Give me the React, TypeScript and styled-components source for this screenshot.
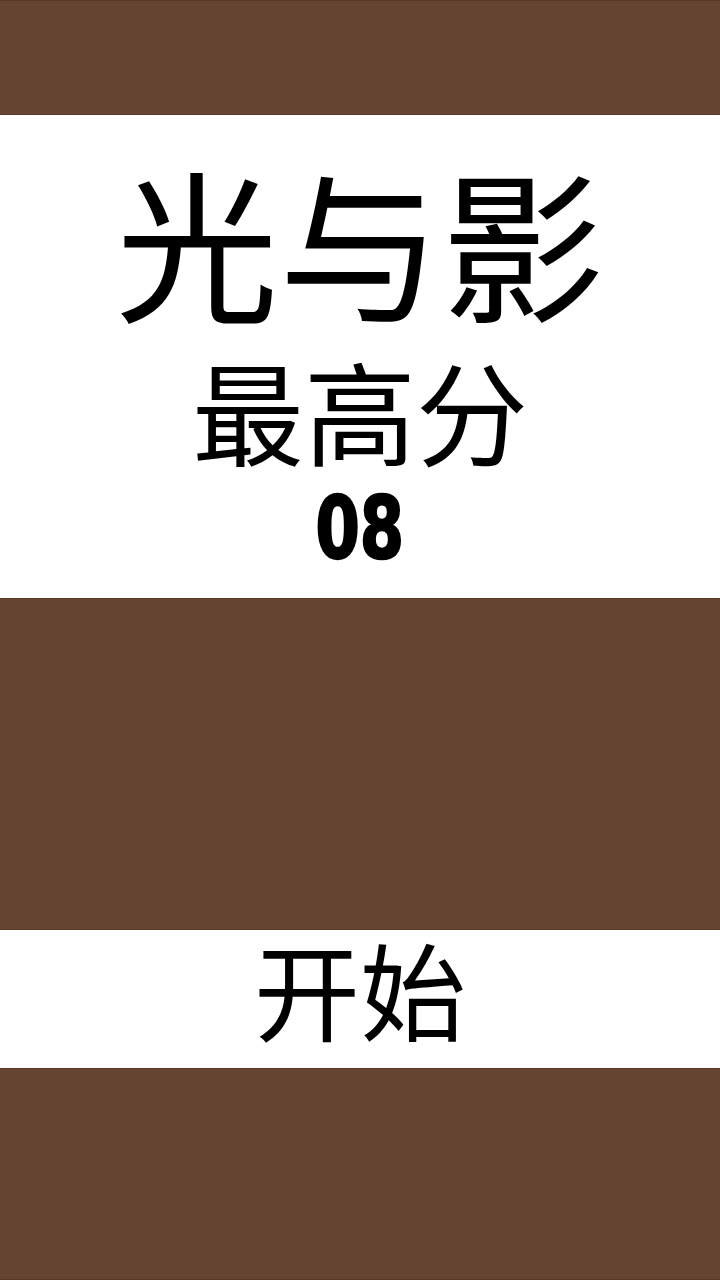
import React from "react";
import styled, { createGlobalStyle } from "styled-components";

const GlobalStyle = createGlobalStyle`
  html, body {
    margin: 0;
    padding: 0;
    background: #654532;
  }
  body {
    font-family: "Noto Sans CJK SC", "Noto Sans", sans-serif;
    color: #000;
  }
`;

const Screen = styled.div`
  width: 720px;
  height: 1280px;
  display: flex;
  flex-direction: column;
  background: #654532;
  overflow: hidden;
`;

const Band = styled.div<{ $h: number }>`
  height: ${(p) => p.$h}px;
  flex: none;
  background: #654532;
  border-top: 1px solid #5a3a27;
  border-bottom: 1px solid #5a3a27;
  box-sizing: border-box;
`;

const TitlePanel = styled.section`
  height: 483px;
  flex: none;
  background: #fff;
  display: flex;
  flex-direction: column;
  align-items: center;
  box-sizing: border-box;
  padding-top: 43px;
`;

const Title = styled.h1`
  margin: 0;
  font-family: "Noto Sans CJK SC", sans-serif;
  font-weight: 400;
  font-size: 163px;
  line-height: 1;
  letter-spacing: 0;
  white-space: nowrap;
`;

const ScoreLabel = styled.div`
  margin-top: 32px;
  font-family: "Noto Sans CJK SC", sans-serif;
  font-weight: 400;
  font-size: 112px;
  line-height: 1;
  white-space: nowrap;
`;

const ScoreValue = styled.div`
  margin-top: 20px;
  font-family: "DejaVu Sans", sans-serif;
  font-weight: 700;
  font-size: 86px;
  line-height: 1;
  transform: scaleX(0.74);
  -webkit-text-stroke: 2.5px #000;
`;

const StartButton = styled.button`
  height: 138px;
  flex: none;
  width: 100%;
  border: none;
  margin: 0;
  background: #fff;
  color: #000;
  font-family: "Noto Sans CJK SC", sans-serif;
  font-weight: 400;
  font-size: 106px;
  line-height: 1;
  padding: 4px 0 0;
  display: flex;
  align-items: flex-start;
  justify-content: center;
  cursor: pointer;
`;

export default function App() {
  return (
    <>
      <GlobalStyle />
      <Screen>
        <Band $h={115} />
        <TitlePanel>
          <Title>光与影</Title>
          <ScoreLabel>最高分</ScoreLabel>
          <ScoreValue>08</ScoreValue>
        </TitlePanel>
        <Band $h={332} />
        <StartButton>开始</StartButton>
        <Band $h={212} />
      </Screen>
    </>
  );
}
